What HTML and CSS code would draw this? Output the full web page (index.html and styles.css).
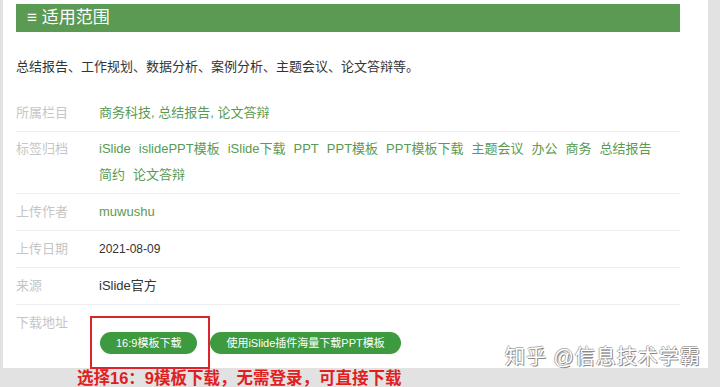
FILE: index.html
```html
<!DOCTYPE html>
<html lang="zh-CN">
  <head>
    <meta charset="UTF-8" />
    <meta name="viewport" content="width=device-width, initial-scale=1.0" />
    <title>适用范围</title>
    <link rel="stylesheet" href="styles.css">
  </head>

  <body>
    <div class="page">
      <section class="panel">
        <h2 class="bar">≡ 适用范围</h2>
        <p class="scope">总结报告、工作规划、数据分析、案例分析、主题会议、论文答辩等。</p>

        <div class="info">
          <div class="row">
            <span class="label">所属栏目</span>
            <span class="value green">商务科技, 总结报告, 论文答辩</span>
          </div>
          <div class="row tags">
            <span class="label">标签归档</span>
            <span class="value green">
              <a>iSlide</a><a>islidePPT模板</a><a>iSlide下载</a><a>PPT</a><a>PPT模板</a><a>PPT模板下载</a><a>主题会议</a><a>办公</a><a>商务</a><a>总结报告</a><a>简约</a><a>论文答辩</a>
            </span>
          </div>
          <div class="row">
            <span class="label">上传作者</span>
            <span class="value green">muwushu</span>
          </div>
          <div class="row">
            <span class="label">上传日期</span>
            <span class="value small">2021-08-09</span>
          </div>
          <div class="row">
            <span class="label">来源</span>
            <span class="value">iSlide官方</span>
          </div>
          <div class="row last">
            <span class="label">下载地址</span>
            <span class="value buttons">
              <a class="btn">16:9模板下载</a>
              <a class="btn">使用iSlide插件海量下载PPT模板</a>
            </span>
          </div>
        </div>

        <!-- 截图上的标注 -->
        <div class="mark"></div>
        <div class="watermark">知乎 @信息技术学霸</div>
      </section>
      <p class="note">选择16：9模板下载，无需登录，可直接下载</p>
    </div>
  </body>
</html>
```

FILE: styles.css
```css
* {
  box-sizing: border-box;
}

body {
  margin: 0;
  background-color: #e2e2e2;
  font-family: "Liberation Sans", "Noto Sans CJK SC", sans-serif;
  color: #333;
}

.page {
  position: relative;
  width: 720px;
  height: 387px;
  overflow: hidden;
}

.panel {
  position: relative;
  margin-left: 3px;
  width: 705px;
  height: 368px;
  padding: 4px 28px 0 13px;
  background-color: #fff;
}

.bar {
  margin: 0;
  height: 28px;
  padding-left: 11px;
  background-color: #5b9a52;
  color: #fff;
  font-size: 17px;
  font-weight: normal;
  line-height: 28px;
}

.scope {
  margin: 0;
  padding: 26px 0 19px;
  font-size: 13px;
  line-height: 18px;
}

.row {
  display: flex;
  padding: 9px 0;
  border-bottom: 1px solid #eeeeee;
  font-size: 13px;
  line-height: 18px;
}

.row.tags {
  padding: 4px 0 5px;
  line-height: 26px;
}

.row.last {
  border-bottom: none;
  padding-bottom: 0;
}

.label {
  flex: 0 0 83px;
  color: #c6c6c6;
}

.value.green {
  color: #5a9a52;
}

.value.small {
  font-size: 12px;
}

.tags a {
  display: inline-block;
  margin-right: 8px;
}

.buttons {
  display: flex;
  gap: 13px;
  padding-top: 18px;
  margin-left: 1px;
}

.btn {
  display: inline-block;
  height: 22px;
  padding: 0 16px;
  border-radius: 11px;
  background-color: #3e9a3f;
  color: #fff;
  font-size: 11px;
  line-height: 22px;
}

.btn + .btn {
  padding: 0 16px;
}

.mark {
  position: absolute;
  left: 87px;
  top: 316px;
  width: 120px;
  height: 53px;
  border: 2px solid #d9262c;
}

.watermark {
  position: absolute;
  left: 502px;
  top: 341px;
  font-size: 20px;
  letter-spacing: 1px;
  color: #fff;
  text-shadow: 1px 1px 0 #8a8a8a, -1px 0 0 #b0b0b0, 0 -1px 0 #b0b0b0;
}

.note {
  position: absolute;
  left: 77px;
  top: 368px;
  margin: 0;
  color: #e0201f;
  font-size: 16.5px;
  font-weight: bold;
  line-height: 20px;
}
```
